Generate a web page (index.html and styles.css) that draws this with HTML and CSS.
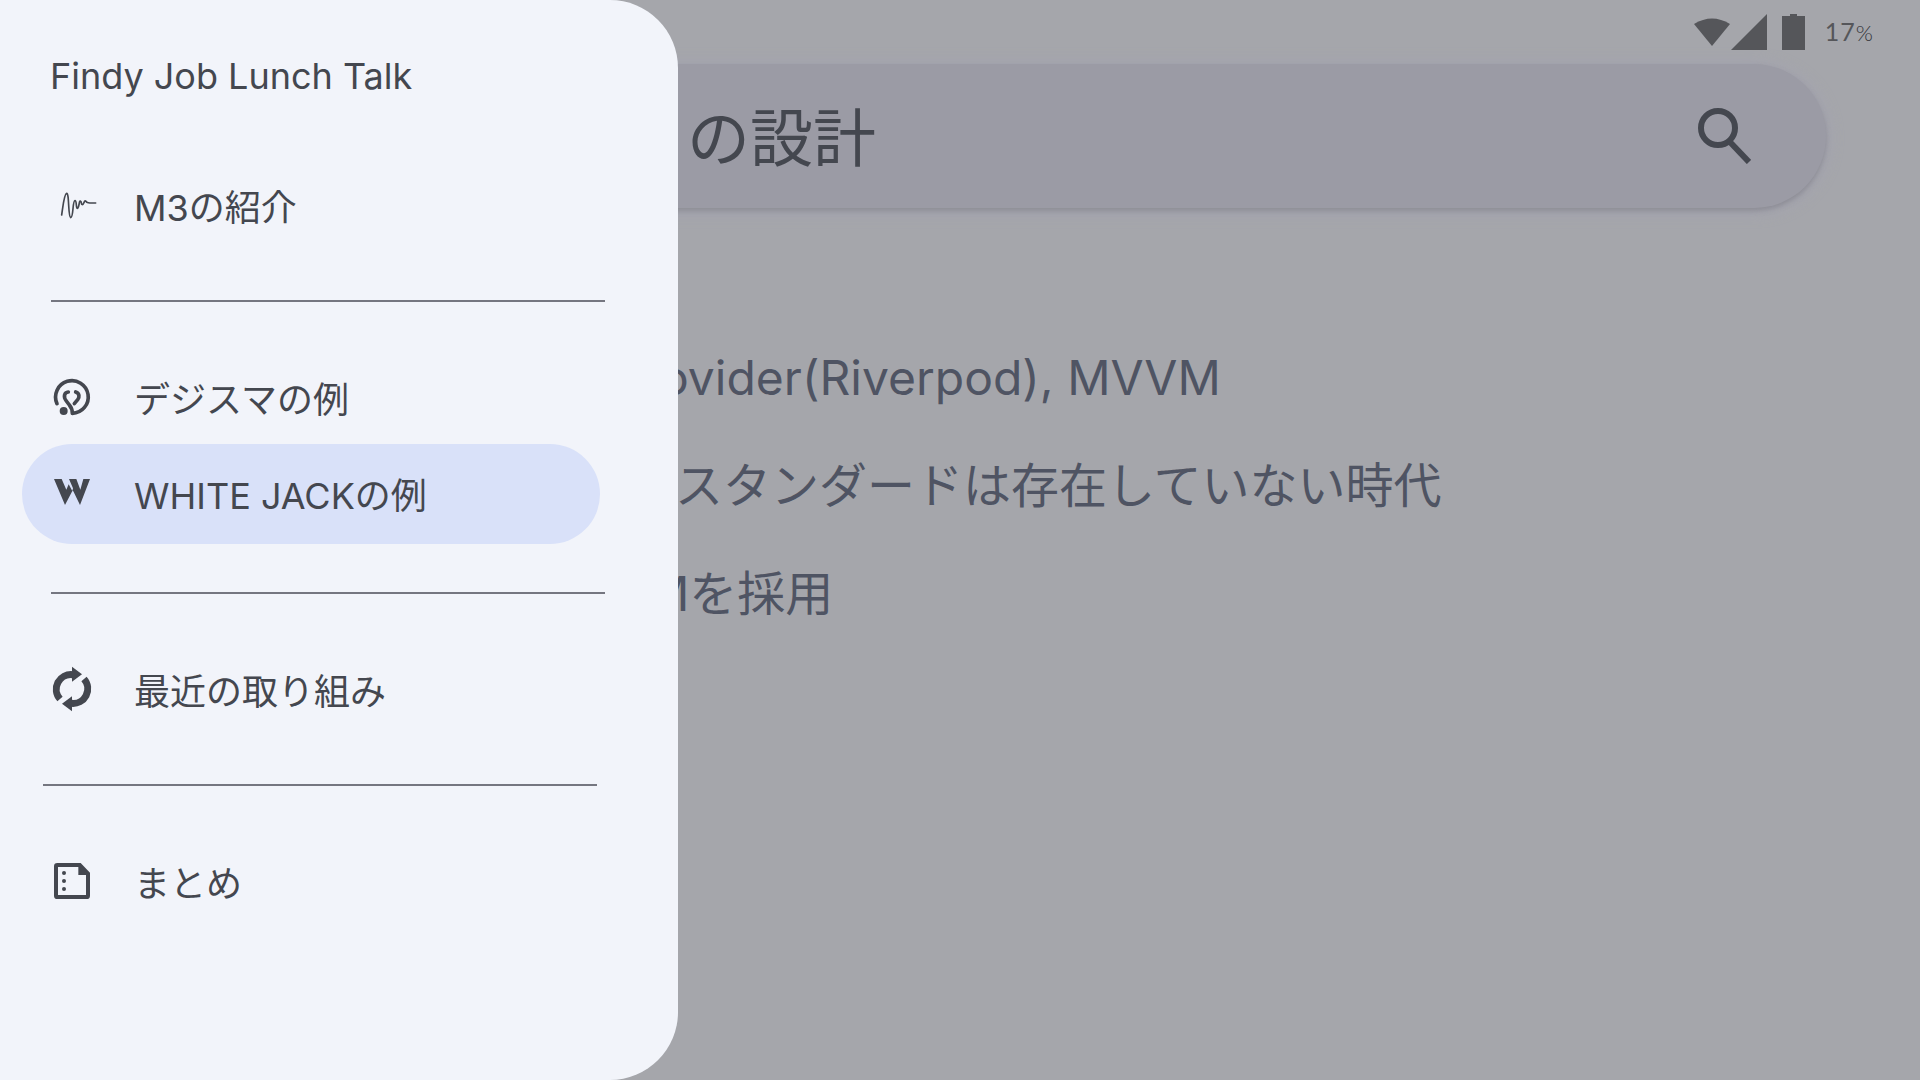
FILE: index.html
```html
<!DOCTYPE html>
<html lang="ja">
<head>
    <meta charset="UTF-8">
    <meta name="viewport" content="width=device-width, initial-scale=1.0">
    <title>Findy Job Lunch Talk</title>
    <link rel="stylesheet" href="styles.css">
</head>
<body>
    <!-- Navigation drawer -->
    <nav class="drawer">
        <h2 class="drawer-title">Findy Job Lunch Talk</h2>

        <div class="group">
            <a class="item" href="#m3">
                <svg class="icon" viewBox="0 0 108 108" fill="none" stroke="currentColor" stroke-width="5" stroke-linejoin="round" stroke-linecap="round">
                    <path d="M23 84C27 58 30 21 38 19C46 18 42 90 50 92C59 92 55 41 63 41C69 41 65 66 71 64C76 60 75 41 79 42C85 44 79 53 85 53C90 53 91 38 95 42C100 49 105 48 125 48"/>
                </svg>
                <span>M3の紹介</span>
            </a>
        </div>

        <hr class="divider">

        <div class="group group-pair">
            <a class="item" href="#digisma">
                <svg class="icon" viewBox="0 0 108 108">
                    <path d="M9 74A49 49 0 1 1 55 103C55 91 52 85 46 78L37 66C27 53 31 40 43 39M65 39C77 43 77 54 71 62L61 74" fill="none" stroke="currentColor" stroke-width="11" stroke-linecap="round" stroke-linejoin="round"/>
                    <circle cx="29" cy="96" r="12" fill="currentColor"/>
                </svg>
                <span>デジスマの例</span>
            </a>
            <a class="item active" href="#whitejack">
                <svg class="icon" viewBox="0 0 108 108" fill="currentColor">
                    <path d="M0 12H23L37 44L44 28L55 48L33 90Z"/>
                    <path d="M45 12H67L79 44L88 12H108L78 90L58 49L55 48L57 40Z"/>
                </svg>
                <span>WHITE JACKの例</span>
            </a>
        </div>

        <hr class="divider">

        <div class="group">
            <a class="item" href="#recent">
                <svg class="icon" viewBox="0 0 108 108">
                    <g id="arrow">
                        <path d="M18 84A44 44 0 0 1 56 11" fill="none" stroke="currentColor" stroke-width="21"/>
                        <path d="M54 -13L84 10L54 32Z" fill="currentColor"/>
                    </g>
                    <use href="#arrow" transform="rotate(180 54 54)"/>
                </svg>
                <span>最近の取り組み</span>
            </a>
        </div>

        <hr class="divider divider-last">

        <div class="group">
            <a class="item" href="#summary">
                <svg class="icon" viewBox="0 0 108 108" fill="currentColor">
                    <path fill-rule="evenodd" d="M10 0H80L108 29V98Q108 108 98 108H10Q0 108 0 98V10Q0 0 10 0ZM12 12V96H96V36H73V12Z"/>
                    <circle cx="30" cy="30" r="6"/>
                    <circle cx="30" cy="54" r="6"/>
                    <circle cx="30" cy="78" r="6"/>
                </svg>
                <span>まとめ</span>
            </a>
        </div>
    </nav>

    <!-- Page behind the drawer -->
    <div class="page">
        <div class="status">
            <svg class="wifi" viewBox="0 0 36 28"><path fill="currentColor" d="M0 6Q18 -5 36 6L18 28Z"/></svg>
            <svg class="signal" viewBox="0 0 36 36"><path fill="currentColor" d="M36 0V36H0Z"/></svg>
            <svg class="battery" viewBox="0 0 23 36"><path fill="currentColor" d="M0 2H8V0H15V2H23V36H0Z"/></svg>
            <span class="percent">17<small>%</small></span>
        </div>

        <header class="bar">
            <h1>の設計</h1>
            <button class="search" aria-label="検索">
                <svg viewBox="0 0 53 56" fill="none" stroke="currentColor" stroke-width="6">
                    <circle cx="20" cy="20" r="17"/>
                    <path d="M31 33L51 54"/>
                </svg>
            </button>
        </header>

        <main class="content">
            <p class="line line-latin">ovider(Riverpod), MVVM</p>
            <p class="line line-kana">スタンダードは存在していない時代</p>
            <p class="line line-mixed">Mを採用</p>
        </main>
    </div>
</body>
</html>
```

FILE: styles.css
```css
* {
    margin: 0;
    padding: 0;
    box-sizing: border-box;
}

body {
    min-height: 100vh;
    font-family: Inter, "Noto Sans CJK JP", sans-serif;
    font-weight: 400;
    background: #a5a6ab;
    color: #44474f;
    overflow: hidden;
}

/* Drawer */
.drawer {
    position: fixed;
    top: 0;
    bottom: 0;
    left: 0;
    z-index: 10;
    width: 678px;
    padding: 48px 0;
    background: #f2f4fa;
    border-radius: 0 68px 68px 0;
}

.drawer-title {
    margin-bottom: 52px;
    padding-left: 50px;
    font-size: 36px;
    font-weight: 400;
    line-height: 56px;
}

.group {
    padding: 0 78px 0 22px;
}

.group-pair {
    padding-bottom: 4px;
}

.item {
    display: flex;
    align-items: center;
    gap: 44px;
    height: 100px;
    padding: 0 0 2px 32px;
    border-radius: 50px;
    font-size: 36px;
    color: inherit;
    text-decoration: none;
}

.item + .item {
    margin-top: -4px;
}

.active {
    background: #d9e1f9;
}

.icon {
    width: 36px;
    height: 36px;
    overflow: visible;
}

.divider {
    margin: 44px 73px 46px 51px;
    border: 0;
    border-top: 2px solid #757680;
}

.divider-last {
    margin-left: 43px;
    margin-right: 81px;
}

/* Page */
.status {
    display: flex;
    align-items: center;
    justify-content: flex-end;
    height: 64px;
    padding-right: 46px;
    color: #55565a;
}

.wifi {
    width: 36px;
    height: 28px;
}

.signal {
    width: 36px;
    height: 36px;
    margin: 0 15px 0 1px;
}

.battery {
    width: 23px;
    height: 36px;
    margin-right: 20px;
}

.percent {
    font-family: Lato, sans-serif;
    font-size: 25px;
    font-weight: 400;
    line-height: 28px;
    letter-spacing: 1px;
}

.percent small {
    font-size: 22px;
    font-weight: 300;
    color: #33353a;
}

.bar {
    display: flex;
    align-items: center;
    justify-content: space-between;
    height: 144px;
    margin-right: 94px;
    padding: 0 75px 0 687px;
    border-radius: 0 72px 72px 0;
    background: #9b9ba5;
    box-shadow: 0 3px 5px rgba(120, 120, 125, 0.5), 0 2px 14px 4px #a4a4b0;
}

.bar h1 {
    padding-bottom: 6px;
    font-size: 63px;
    font-weight: 400;
}

.search {
    border: 0;
    background: none;
    color: #44474f;
    cursor: pointer;
}

.search svg {
    display: block;
    width: 53px;
    height: 56px;
}

.content {
    padding-top: 116px;
    color: #4f5463;
}

.line {
    font-size: 48px;
    line-height: 108px;
    white-space: nowrap;
}

.line-latin {
    padding-left: 660px;
}

.line-kana {
    padding-left: 675px;
}

.line-mixed {
    padding-left: 646px;
}
```
